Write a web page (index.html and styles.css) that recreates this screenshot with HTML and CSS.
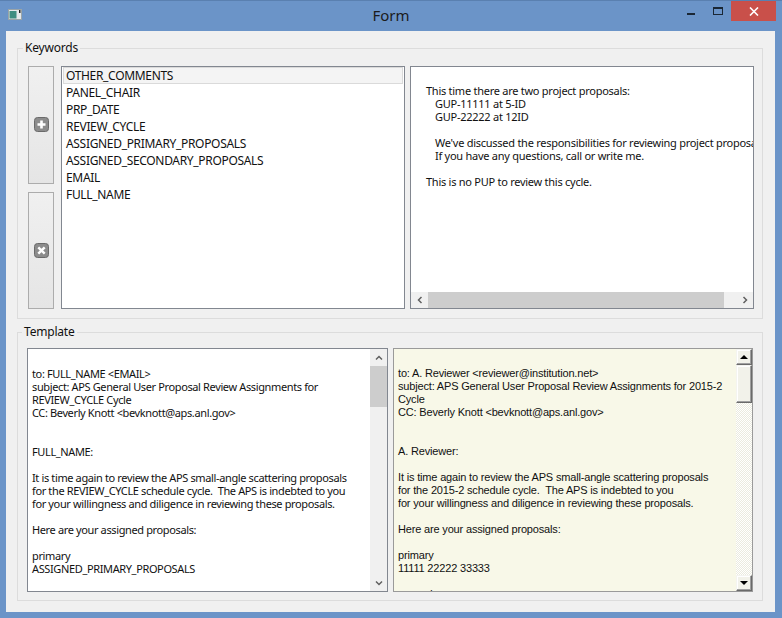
FILE: index.html
```html
<!DOCTYPE html>
<html>
<head>
<meta charset="utf-8">
<title>Form</title>
<link rel="stylesheet" href="styles.css">
</head>
<body>
<div class="window">
  <div class="titlebar">
    <div class="tb-left">
      <svg class="app-icon" width="14" height="11" viewBox="0 0 14 11">
        <rect x="0.5" y="0.5" width="13" height="10" fill="#e4e8ea" stroke="#9aa4a8"/>
        <rect x="1.5" y="2" width="7" height="7.5" fill="#3d8d80"/>
        <rect x="11" y="1" width="1.5" height="3" fill="#222"/>
      </svg>
    </div>
    <div class="tb-title">Form</div>
    <div class="tb-right">
      <span class="tb-min"></span>
      <span class="tb-max"></span>
      <span class="tb-close">
        <svg width="10" height="9" viewBox="0 0 10 9"><path d="M1 0.5 L9 8.5 M9 0.5 L1 8.5" stroke="#fff" stroke-width="1.6"/></svg>
      </span>
    </div>
  </div>

  <div class="client">
    <fieldset class="group kw">
      <legend>Keywords</legend>
      <div class="kw-body">
        <div class="btn-col">
          <button class="tool-btn" type="button" aria-label="Add">
            <svg width="15" height="15" viewBox="0 0 15 15">
              <rect x="0.5" y="0.5" width="14" height="14" rx="3" fill="#8c8c8c" stroke="#6a6a6a"/>
              <path d="M7.5 3.5 V11.5 M3.5 7.5 H11.5" stroke="#fff" stroke-width="2.6"/>
            </svg>
          </button>
          <button class="tool-btn" type="button" aria-label="Remove">
            <svg width="15" height="15" viewBox="0 0 15 15">
              <rect x="0.5" y="0.5" width="14" height="14" rx="3" fill="#8c8c8c" stroke="#6a6a6a"/>
              <path d="M4.3 4.3 L10.7 10.7 M10.7 4.3 L4.3 10.7" stroke="#fff" stroke-width="2.4"/>
            </svg>
          </button>
        </div>
        <ul class="list">
          <li class="cur">OTHER_COMMENTS</li>
          <li>PANEL_CHAIR</li>
          <li>PRP_DATE</li>
          <li>REVIEW_CYCLE</li>
          <li>ASSIGNED_PRIMARY_PROPOSALS</li>
          <li>ASSIGNED_SECONDARY_PROPOSALS</li>
          <li>EMAIL</li>
          <li>FULL_NAME</li>
        </ul>
        <div class="kw-text">
          <div class="kw-doc">
            <div class="ln">&nbsp;</div>
            <div class="ln">This time there are two project proposals:</div>
            <div class="ln ind">GUP-11111 at 5-ID</div>
            <div class="ln ind">GUP-22222 at 12ID</div>
            <div class="ln">&nbsp;</div>
            <div class="ln ind">We've discussed the responsibilities for reviewing project proposals</div>
            <div class="ln ind">If you have any questions, call or write me.</div>
            <div class="ln">&nbsp;</div>
            <div class="ln">This is no PUP to review this cycle.</div>
          </div>
          <div class="hscroll">
            <span class="sbtn"><svg width="8" height="8" viewBox="0 0 8 8"><polyline points="5.5,1 2.5,4 5.5,7" fill="none" stroke="#606060" stroke-width="1.5"/></svg></span>
            <span class="hthumb"></span>
            <span class="htrack"></span>
            <span class="sbtn"><svg width="8" height="8" viewBox="0 0 8 8"><polyline points="2.5,1 5.5,4 2.5,7" fill="none" stroke="#606060" stroke-width="1.5"/></svg></span>
          </div>
        </div>
      </div>
    </fieldset>

    <fieldset class="group tpl">
      <legend>Template</legend>
      <div class="tpl-body">
        <div class="tbox tpl-left">
          <div class="doc doc-s">
            <div class="ln">&nbsp;</div>
            <div class="ln">to: FULL_NAME &lt;EMAIL&gt;</div>
            <div class="ln">subject: APS General User Proposal Review Assignments for</div>
            <div class="ln">REVIEW_CYCLE Cycle</div>
            <div class="ln">CC: Beverly Knott &lt;bevknott@aps.anl.gov&gt;</div>
            <div class="ln">&nbsp;</div>
            <div class="ln">&nbsp;</div>
            <div class="ln">FULL_NAME:</div>
            <div class="ln">&nbsp;</div>
            <div class="ln">It is time again to review the APS small-angle scattering proposals</div>
            <div class="ln">for the REVIEW_CYCLE schedule cycle.&nbsp; The APS is indebted to you</div>
            <div class="ln">for your willingness and diligence in reviewing these proposals.</div>
            <div class="ln">&nbsp;</div>
            <div class="ln">Here are your assigned proposals:</div>
            <div class="ln">&nbsp;</div>
            <div class="ln">primary</div>
            <div class="ln">ASSIGNED_PRIMARY_PROPOSALS</div>
            <div class="ln">&nbsp;</div>
            <div class="ln">secondary</div>
          </div>
          <div class="vscroll">
            <span class="vbtn"><svg width="8" height="8" viewBox="0 0 8 8"><polyline points="1,5.5 4,2.5 7,5.5" fill="none" stroke="#606060" stroke-width="1.5"/></svg></span>
            <span class="vthumb"></span>
            <span class="vtrack"></span>
            <span class="vbtn"><svg width="8" height="8" viewBox="0 0 8 8"><polyline points="1,2.5 4,5.5 7,2.5" fill="none" stroke="#606060" stroke-width="1.5"/></svg></span>
          </div>
        </div>
        <div class="tbox tpl-right">
          <div class="doc doc-t">
            <div class="ln">&nbsp;</div>
            <div class="ln">to: A. Reviewer &lt;reviewer@institution.net&gt;</div>
            <div class="ln">subject: APS General User Proposal Review Assignments for 2015-2</div>
            <div class="ln">Cycle</div>
            <div class="ln">CC: Beverly Knott &lt;bevknott@aps.anl.gov&gt;</div>
            <div class="ln">&nbsp;</div>
            <div class="ln">&nbsp;</div>
            <div class="ln">A. Reviewer:</div>
            <div class="ln">&nbsp;</div>
            <div class="ln">It is time again to review the APS small-angle scattering proposals</div>
            <div class="ln">for the 2015-2 schedule cycle.&nbsp; The APS is indebted to you</div>
            <div class="ln">for your willingness and diligence in reviewing these proposals.</div>
            <div class="ln">&nbsp;</div>
            <div class="ln">Here are your assigned proposals:</div>
            <div class="ln">&nbsp;</div>
            <div class="ln">primary</div>
            <div class="ln">11111 22222 33333</div>
            <div class="ln">&nbsp;</div>
            <div class="ln">secondary</div>
          </div>
          <div class="cscroll">
            <span class="cbtn"><span class="tri-up"></span></span>
            <span class="cthumb"></span>
            <span class="ctrack"></span>
            <span class="cbtn"><span class="tri-down"></span></span>
          </div>
        </div>
      </div>
    </fieldset>
  </div>
</div>
</body>
</html>
```

FILE: styles.css
```css
* { box-sizing: border-box; }

html, body {
  margin: 0;
  padding: 0;
}

body {
  width: 782px;
  height: 618px;
  overflow: hidden;
  background: #6b94c8;
  font-family: "Noto Sans", "Open Sans", sans-serif;
  color: #111;
}

.window {
  display: flex;
  flex-direction: column;
  height: 618px;
  border-top: 1px solid #5a80b0;
}

/* ---------- title bar ---------- */
.titlebar {
  flex: none;
  height: 30px;
  display: grid;
  grid-template-columns: 1fr auto 1fr;
  align-items: start;
}

.tb-left {
  display: flex;
  padding: 8px 0 0 8px;
}

.tb-title {
  font-size: 15px;
  line-height: 20px;
  padding-top: 4px;
  color: #1b1b1b;
}

.tb-right {
  display: flex;
  justify-content: flex-end;
  align-items: flex-start;
  padding-right: 6px;
}

.tb-min {
  width: 8px;
  height: 2px;
  margin-top: 12px;
  margin-right: 18px;
  background: #1a2735;
}

.tb-max {
  width: 10px;
  height: 8px;
  margin-top: 6px;
  margin-right: 8px;
  border: 1px solid #1a2735;
  border-top-width: 2px;
}

.tb-close {
  width: 45px;
  height: 20px;
  display: flex;
  align-items: center;
  justify-content: center;
  background: #c9504a;
}

/* ---------- client area ---------- */
.client {
  flex: 1;
  display: flex;
  flex-direction: column;
  margin: 0 7px 6px 6px;
  background: #f0f0f0;
}

.group {
  margin: 0 12px 0 11px;
  border: 1px solid #dcdcdc;
  min-width: 0;
}

.group legend {
  font-size: 12px;
  line-height: 16px;
  padding: 0 2px;
  margin-left: -5px;
  letter-spacing: -0.2px;
  color: #111;
}

.kw {
  margin-top: 9px;
  padding: 10px 8px 9px 10px;
}

.kw-body {
  display: flex;
  height: 243px;
}

.btn-col {
  width: 26px;
  margin-right: 7px;
  display: flex;
  flex-direction: column;
  gap: 8px;
}

.tool-btn {
  flex: 1;
  padding: 0;
  border: 1px solid #acacac;
  background: linear-gradient(#f0f0f0, #e5e5e5);
  display: flex;
  align-items: center;
  justify-content: center;
}

.list {
  width: 344px;
  margin: 0 5px 0 0;
  padding: 0 1px;
  list-style: none;
  border: 1px solid #828790;
  background: #fff;
  font-size: 12px;
  letter-spacing: -0.32px;
  color: #111;
}

.list li {
  height: 17px;
  line-height: 15px;
  padding-left: 2px;
  border: 1px solid transparent;
  white-space: nowrap;
}

.list li.cur {
  border-color: #dadada;
  background: #f4f4f4;
}

.kw-text {
  width: 344px;
  display: flex;
  flex-direction: column;
  border: 1px solid #828790;
  background: #fff;
}

.kw-doc {
  flex: 1;
  overflow: hidden;
  padding: 4px 0 0 15px;
  font-size: 11px;
  line-height: 13px;
  letter-spacing: -0.26px;
  white-space: nowrap;
}

.kw-doc .ind {
  padding-left: 9px;
}

.hscroll {
  flex: none;
  height: 16px;
  display: flex;
  background: #f0f0f0;
}

.sbtn {
  width: 17px;
  display: flex;
  align-items: center;
  justify-content: center;
}

.hthumb {
  width: 296px;
  background: #cdcdcd;
}

.htrack {
  flex: 1;
}

/* ---------- template ---------- */
.tpl {
  margin-top: 5px;
  padding: 8px 9px 8px 9px;
}

.tpl-body {
  display: flex;
  gap: 5px;
  height: 244px;
}

.tbox {
  display: flex;
  overflow: hidden;
  border: 1px solid #828790;
}

.tpl-left {
  width: 361px;
  background: #fff;
}

.tpl-right {
  width: 360px;
  background: #f8f8e8;
  border-color: #9a9a9a;
}

.doc {
  flex: 1;
  min-width: 0;
  overflow: hidden;
  padding: 5px 0 0 4px;
  font-size: 11px;
  line-height: 13px;
  white-space: nowrap;
}

.doc-s {
  letter-spacing: -0.37px;
}

.doc-t {
  font-family: "Liberation Sans", "DejaVu Sans", sans-serif;
  letter-spacing: -0.17px;
}

.vscroll {
  flex: none;
  width: 17px;
  display: flex;
  flex-direction: column;
  background: #f0f0f0;
}

.vbtn {
  height: 17px;
  display: flex;
  align-items: center;
  justify-content: center;
}

.vthumb {
  height: 41px;
  background: #cdcdcd;
}

.vtrack {
  flex: 1;
}

.cscroll {
  flex: none;
  width: 16px;
  display: flex;
  flex-direction: column;
}

.cbtn,
.cthumb {
  background: #f2f2ea;
  border: 1px solid;
  border-color: #f4f4f0 #6a6a6a #6a6a6a #f4f4f0;
  box-shadow: inset -1px -1px #a0a0a0, inset 1px 1px #ffffff;
}

.cbtn {
  height: 16px;
  display: flex;
  align-items: center;
  justify-content: center;
}

.cthumb {
  height: 38px;
}

.ctrack {
  flex: 1;
  background: repeating-conic-gradient(#ffffff 0 25%, #ebebdf 0 50%) 0 0 / 2px 2px;
}

.tri-up {
  width: 0;
  height: 0;
  border-left: 4px solid transparent;
  border-right: 4px solid transparent;
  border-bottom: 4px solid #000;
}

.tri-down {
  width: 0;
  height: 0;
  border-left: 4px solid transparent;
  border-right: 4px solid transparent;
  border-top: 4px solid #000;
}
```
